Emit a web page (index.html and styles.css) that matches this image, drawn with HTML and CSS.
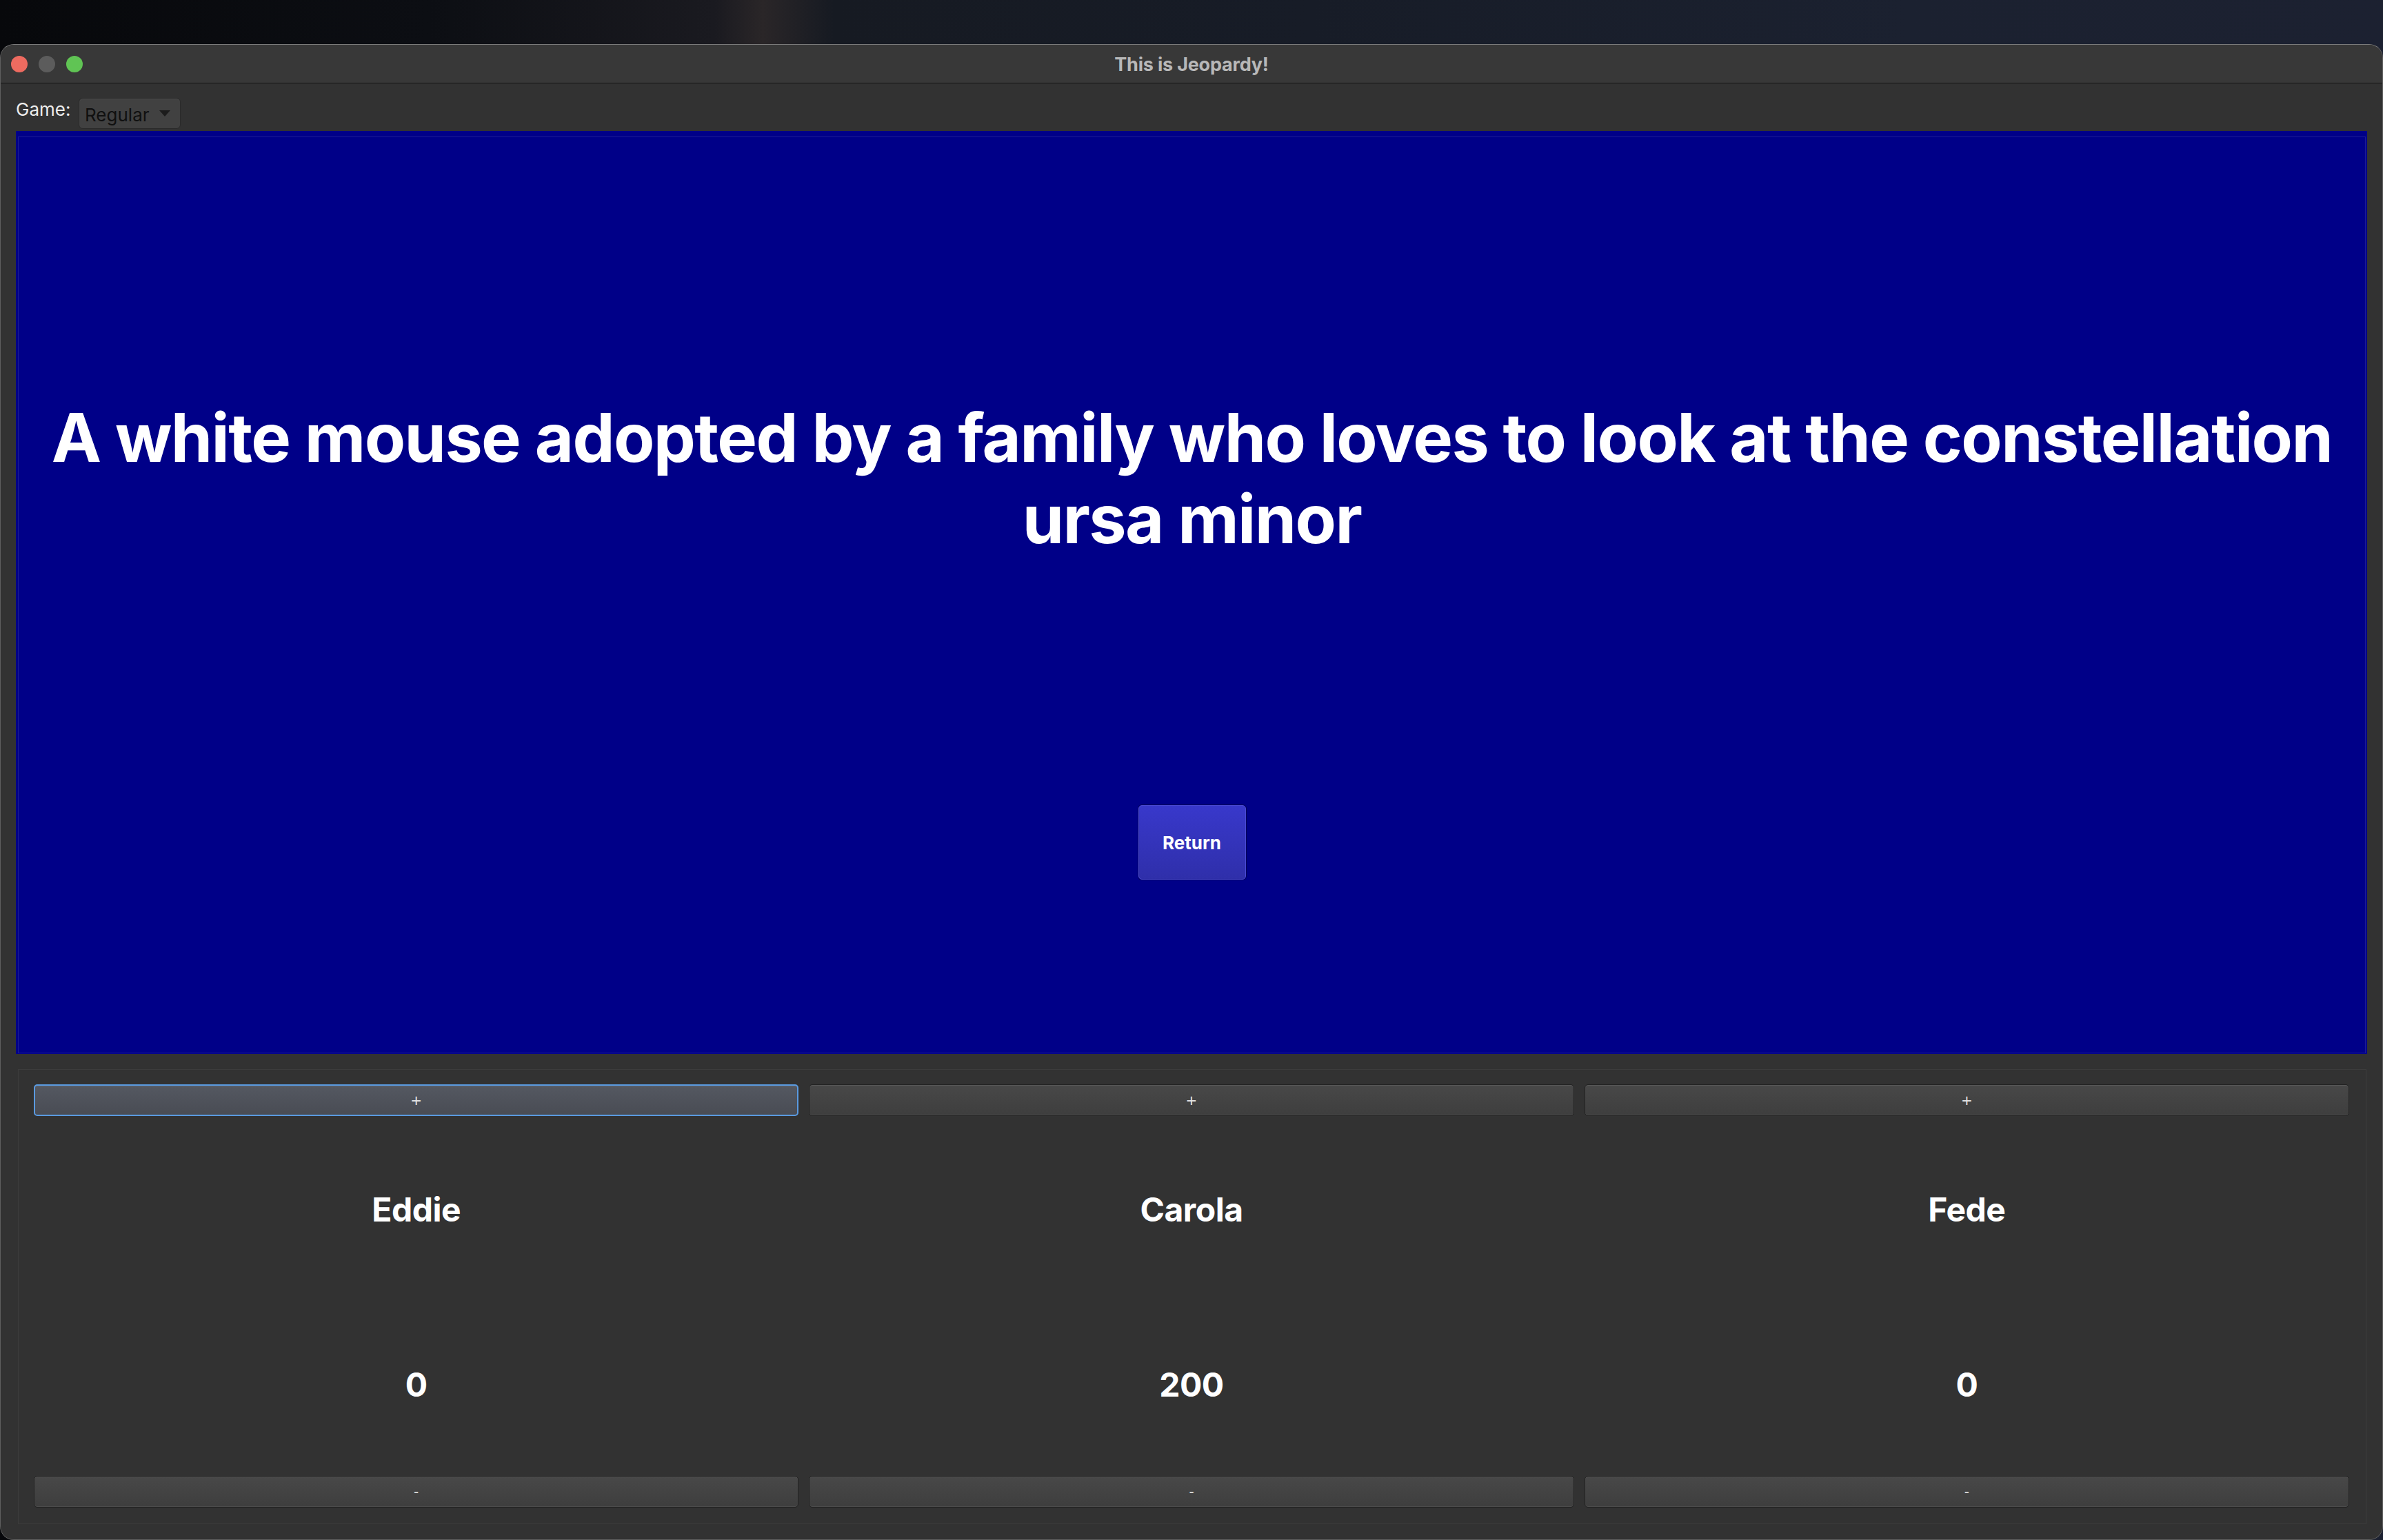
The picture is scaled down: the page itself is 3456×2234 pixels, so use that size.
FILE: index.html
```html
<!DOCTYPE html>
<html>
<head>
<meta charset="utf-8">
<link rel="stylesheet" href="styles.css">
</head>
<body>
<div class="window">
  <div class="titlebar">
    <div class="lights">
      <span class="light red"></span>
      <span class="light gray"></span>
      <span class="light green"></span>
    </div>
    <div class="title">This is Jeopardy!</div>
    <div></div>
  </div>
  <div class="content">
    <div class="game-row">
      <span class="game-label">Game:</span>
      <div class="select">
        <span class="select-text">Regular</span>
        <svg class="select-arrow" width="16" height="10" viewBox="0 0 16 10"><path d="M0 0 L16 0 L8 9 Z" fill="#1c1c1c"/></svg>
      </div>
    </div>
    <div class="board">
      <div class="card">
        <div class="question">A white mouse adopted by a family who loves to look at the constellation ursa minor</div>
        <button class="return-btn">Return</button>
      </div>
    </div>
    <div class="players">
      <div class="player">
        <button class="btn focus">+</button>
        <div class="name">Eddie</div>
        <div class="score">0</div>
        <button class="btn">-</button>
      </div>
      <div class="player">
        <button class="btn">+</button>
        <div class="name">Carola</div>
        <div class="score">200</div>
        <button class="btn">-</button>
      </div>
      <div class="player">
        <button class="btn">+</button>
        <div class="name">Fede</div>
        <div class="score">0</div>
        <button class="btn">-</button>
      </div>
    </div>
  </div>
</div>
</body>
</html>
```

FILE: styles.css
```css
html, body {
  margin: 0;
  padding: 0;
}
body {
  width: 3456px;
  height: 2234px;
  overflow: hidden;
  background: linear-gradient(90deg, #07080b 0%, #0c0e13 18%, #1a1a20 30%, #2a2628 32%, #161a22 35%, #171c27 55%, #1b2130 80%, #1c2131 100%);
  font-family: Inter, "Noto Sans", sans-serif;
}
.window {
  margin-top: 64px;
  height: 2170px;
  box-sizing: border-box;
  border: 1px solid #5e5e5e;
  border-top-color: #7a7a7a;
  border-radius: 20px 20px 20px 20px;
  overflow: hidden;
  background: #323232;
  display: flex;
  flex-direction: column;
}
.titlebar {
  height: 55px;
  flex: none;
  background: #383838;
  border-bottom: 1px solid #121212;
  display: grid;
  grid-template-columns: 1fr auto 1fr;
  align-items: center;
}
.lights {
  display: flex;
  gap: 16px;
  padding-left: 15px;
  padding-top: 1px;
}
.light {
  width: 24px;
  height: 24px;
  border-radius: 50%;
  display: block;
}
.light.red { background: #ee6b60; }
.light.gray { background: #5c5c5c; }
.light.green { background: #60c454; }
.title {
  color: #b8b8b8;
  font-size: 27px;
  font-weight: 700;
  letter-spacing: -0.2px;
  padding-top: 2px;
}
.content {
  flex: 1;
  display: flex;
  flex-direction: column;
  background: #323232;
}
.game-row {
  height: 69px;
  flex: none;
  display: flex;
  align-items: flex-start;
  padding-left: 22px;
}
.game-label {
  color: #ececec;
  font-size: 26px;
  line-height: 30px;
  margin-top: 23px;
  width: 91px;
}
.select {
  margin-top: 21px;
  width: 148px;
  height: 45px;
  box-sizing: border-box;
  border: 1px solid #2a2a2a;
  border-radius: 6px;
  background: #414141;
  box-shadow: inset 0 1px 0 #4c4c4c;
  display: flex;
  align-items: center;
  padding-left: 8px;
  padding-right: 14px;
  justify-content: space-between;
}
.select-text {
  color: #101010;
  font-size: 26px;
  line-height: 45px;
  padding-top: 4px;
}
.board {
  margin: 0 22px;
  height: 1339px;
  flex: none;
  background: #000088;
  padding: 8px 2px 1px 3px;
  box-sizing: border-box;
  display: flex;
}
.card {
  flex: 1;
  border: 1px solid #1c1c96;
  display: flex;
  flex-direction: column;
  align-items: center;
}
.question {
  margin-top: 377px;
  color: #ffffff;
  font-size: 97px;
  font-weight: 700;
  line-height: 118px;
  letter-spacing: -1.6px;
  text-align: center;
  padding: 0 10px;
}
.return-btn {
  margin-top: 356px;
  width: 156px;
  height: 108px;
  border: 1px solid #4a4ad2;
  border-radius: 5px;
  background: linear-gradient(180deg, #3838cb 0%, #2f2faa 100%);
  box-shadow: 0 0 0 1px #00005c;
  color: #ffffff;
  font-family: Inter, sans-serif;
  font-size: 26px;
  font-weight: 700;
  padding: 0;
}
.players {
  margin: 22px 23px 0 25px;
  height: 660px;
  flex: none;
  box-sizing: border-box;
  border: 1px solid #3c3c3c;
  padding: 21px 24px 23px 22px;
  display: grid;
  grid-template-columns: 1fr 1fr 1fr;
  column-gap: 15px;
}
.player {
  display: grid;
  grid-template-rows: 46px 1fr 1fr 46px;
  row-gap: 15px;
}
.btn {
  height: 46px;
  box-sizing: border-box;
  border: 1px solid #222222;
  border-radius: 5px;
  background: linear-gradient(180deg, #484848 0%, #3e3e3e 100%);
  box-shadow: inset 0 1px 0 #575757, inset 0 -1px 0 #4b4b4b;
  color: #e6e6e6;
  font-family: "DejaVu Sans", sans-serif;
  font-size: 20px;
  padding: 0;
}
.btn.focus {
  border: 2px solid #5a9ae0;
  background: linear-gradient(180deg, #545861 0%, #494c54 100%);
  box-shadow: inset 0 1px 0 #60646c;
}
.name, .score {
  display: flex;
  align-items: center;
  justify-content: center;
  color: #ffffff;
  font-size: 48px;
  font-weight: 700;
  letter-spacing: -0.5px;
  padding-top: 3px;
}
```
